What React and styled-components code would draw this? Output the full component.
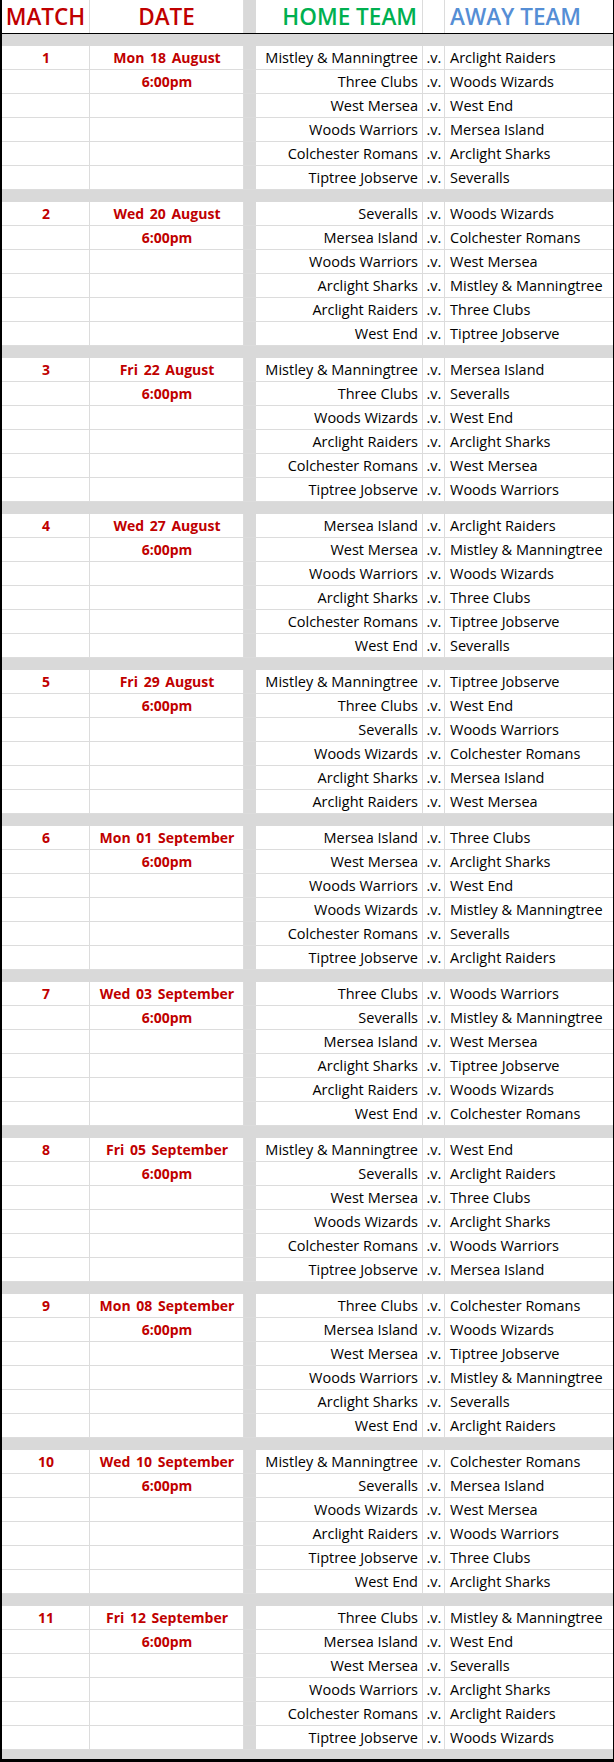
import React from "react";
import styled, { createGlobalStyle } from "styled-components";

const GlobalStyle = createGlobalStyle`
  html, body {
    margin: 0;
    padding: 0;
    background: #ffffff;
  }
  body {
    font-family: "Comic Sans MS", "Open Sans", sans-serif;
  }
`;

const fixtures = [
  { day: "Mon 18 August", games: [
    ["Mistley & Manningtree", "Arclight Raiders"],
    ["Three Clubs", "Woods Wizards"],
    ["West Mersea", "West End"],
    ["Woods Warriors", "Mersea Island"],
    ["Colchester Romans", "Arclight Sharks"],
    ["Tiptree Jobserve", "Severalls"],
  ] },
  { day: "Wed 20 August", games: [
    ["Severalls", "Woods Wizards"],
    ["Mersea Island", "Colchester Romans"],
    ["Woods Warriors", "West Mersea"],
    ["Arclight Sharks", "Mistley & Manningtree"],
    ["Arclight Raiders", "Three Clubs"],
    ["West End", "Tiptree Jobserve"],
  ] },
  { day: "Fri 22 August", games: [
    ["Mistley & Manningtree", "Mersea Island"],
    ["Three Clubs", "Severalls"],
    ["Woods Wizards", "West End"],
    ["Arclight Raiders", "Arclight Sharks"],
    ["Colchester Romans", "West Mersea"],
    ["Tiptree Jobserve", "Woods Warriors"],
  ] },
  { day: "Wed 27 August", games: [
    ["Mersea Island", "Arclight Raiders"],
    ["West Mersea", "Mistley & Manningtree"],
    ["Woods Warriors", "Woods Wizards"],
    ["Arclight Sharks", "Three Clubs"],
    ["Colchester Romans", "Tiptree Jobserve"],
    ["West End", "Severalls"],
  ] },
  { day: "Fri 29 August", games: [
    ["Mistley & Manningtree", "Tiptree Jobserve"],
    ["Three Clubs", "West End"],
    ["Severalls", "Woods Warriors"],
    ["Woods Wizards", "Colchester Romans"],
    ["Arclight Sharks", "Mersea Island"],
    ["Arclight Raiders", "West Mersea"],
  ] },
  { day: "Mon 01 September", games: [
    ["Mersea Island", "Three Clubs"],
    ["West Mersea", "Arclight Sharks"],
    ["Woods Warriors", "West End"],
    ["Woods Wizards", "Mistley & Manningtree"],
    ["Colchester Romans", "Severalls"],
    ["Tiptree Jobserve", "Arclight Raiders"],
  ] },
  { day: "Wed 03 September", games: [
    ["Three Clubs", "Woods Warriors"],
    ["Severalls", "Mistley & Manningtree"],
    ["Mersea Island", "West Mersea"],
    ["Arclight Sharks", "Tiptree Jobserve"],
    ["Arclight Raiders", "Woods Wizards"],
    ["West End", "Colchester Romans"],
  ] },
  { day: "Fri 05 September", games: [
    ["Mistley & Manningtree", "West End"],
    ["Severalls", "Arclight Raiders"],
    ["West Mersea", "Three Clubs"],
    ["Woods Wizards", "Arclight Sharks"],
    ["Colchester Romans", "Woods Warriors"],
    ["Tiptree Jobserve", "Mersea Island"],
  ] },
  { day: "Mon 08 September", games: [
    ["Three Clubs", "Colchester Romans"],
    ["Mersea Island", "Woods Wizards"],
    ["West Mersea", "Tiptree Jobserve"],
    ["Woods Warriors", "Mistley & Manningtree"],
    ["Arclight Sharks", "Severalls"],
    ["West End", "Arclight Raiders"],
  ] },
  { day: "Wed 10 September", games: [
    ["Mistley & Manningtree", "Colchester Romans"],
    ["Severalls", "Mersea Island"],
    ["Woods Wizards", "West Mersea"],
    ["Arclight Raiders", "Woods Warriors"],
    ["Tiptree Jobserve", "Three Clubs"],
    ["West End", "Arclight Sharks"],
  ] },
  { day: "Fri 12 September", games: [
    ["Three Clubs", "Mistley & Manningtree"],
    ["Mersea Island", "West End"],
    ["West Mersea", "Severalls"],
    ["Woods Warriors", "Arclight Sharks"],
    ["Colchester Romans", "Arclight Raiders"],
    ["Tiptree Jobserve", "Woods Wizards"],
  ] },
];

const GRID = "#dcdcdc";
const BAND = "#d9d9d9";
const RED = "#c00000";

const Sheet = styled.div`
  width: 614px;
  box-sizing: border-box;
  border-left: 2px solid #000;
  border-right: 1px solid #000;
  border-bottom: 3px solid #000;
  background: #fff;
`;

const Row = styled.div`
  display: grid;
  grid-template-columns: 88px 154px 12px 167px 22px 168px;
  height: ${(p) => (p.$head ? "34px" : "24px")};
  box-sizing: border-box;
  border-bottom: 1px solid ${(p) => (p.$head ? "#000" : GRID)};
`;

const Cell = styled.div`
  box-sizing: border-box;
  border-right: 1px solid ${GRID};
  display: flex;
  align-items: center;
  justify-content: ${(p) =>
    p.$align === "right" ? "flex-end" : p.$align === "left" ? "flex-start" : "center"};
  padding: 0 4px 0 5px;
  font-size: 14.5px;
  color: #000;
  white-space: nowrap;
  overflow: hidden;
  &:last-child {
    border-right: none;
  }
`;

const DateCell = styled(Cell)`
  color: ${RED};
  font-weight: bold;
  font-size: 14px;
  word-spacing: 2px;
`;

const HeadCell = styled(Cell)`
  font-size: 22.5px;
  font-weight: 600;
  color: ${(p) => p.$color || RED};
  padding: 0 5px;
`;

const Gap = styled.div`
  background: ${BAND};
`;

const Band = styled.div`
  height: ${(p) => (p.$last ? "9px" : "12px")};
  background: ${BAND};
`;

function Fixture({ no, day, index, home, away }) {
  return (
    <Row>
      <DateCell>{index === 0 ? no : ""}</DateCell>
      <DateCell>{index === 0 ? day : index === 1 ? "6:00pm" : ""}</DateCell>
      <Gap />
      <Cell $align="right">{home}</Cell>
      <Cell>.v.</Cell>
      <Cell $align="left">{away}</Cell>
    </Row>
  );
}

export default function App() {
  return (
    <>
      <GlobalStyle />
      <Sheet>
        <Row $head>
          <HeadCell>MATCH</HeadCell>
          <HeadCell>DATE</HeadCell>
          <Gap />
          <HeadCell $align="right" $color="#00b050">HOME TEAM</HeadCell>
          <HeadCell />
          <HeadCell $align="left" $color="#558ed5">AWAY TEAM</HeadCell>
        </Row>
        {fixtures.map((f, i) => (
          <React.Fragment key={f.day}>
            <Band />
            {f.games.map(([home, away], j) => (
              <Fixture key={j} no={i + 1} day={f.day} index={j} home={home} away={away} />
            ))}
          </React.Fragment>
        ))}
        <Band $last />
      </Sheet>
    </>
  );
}
